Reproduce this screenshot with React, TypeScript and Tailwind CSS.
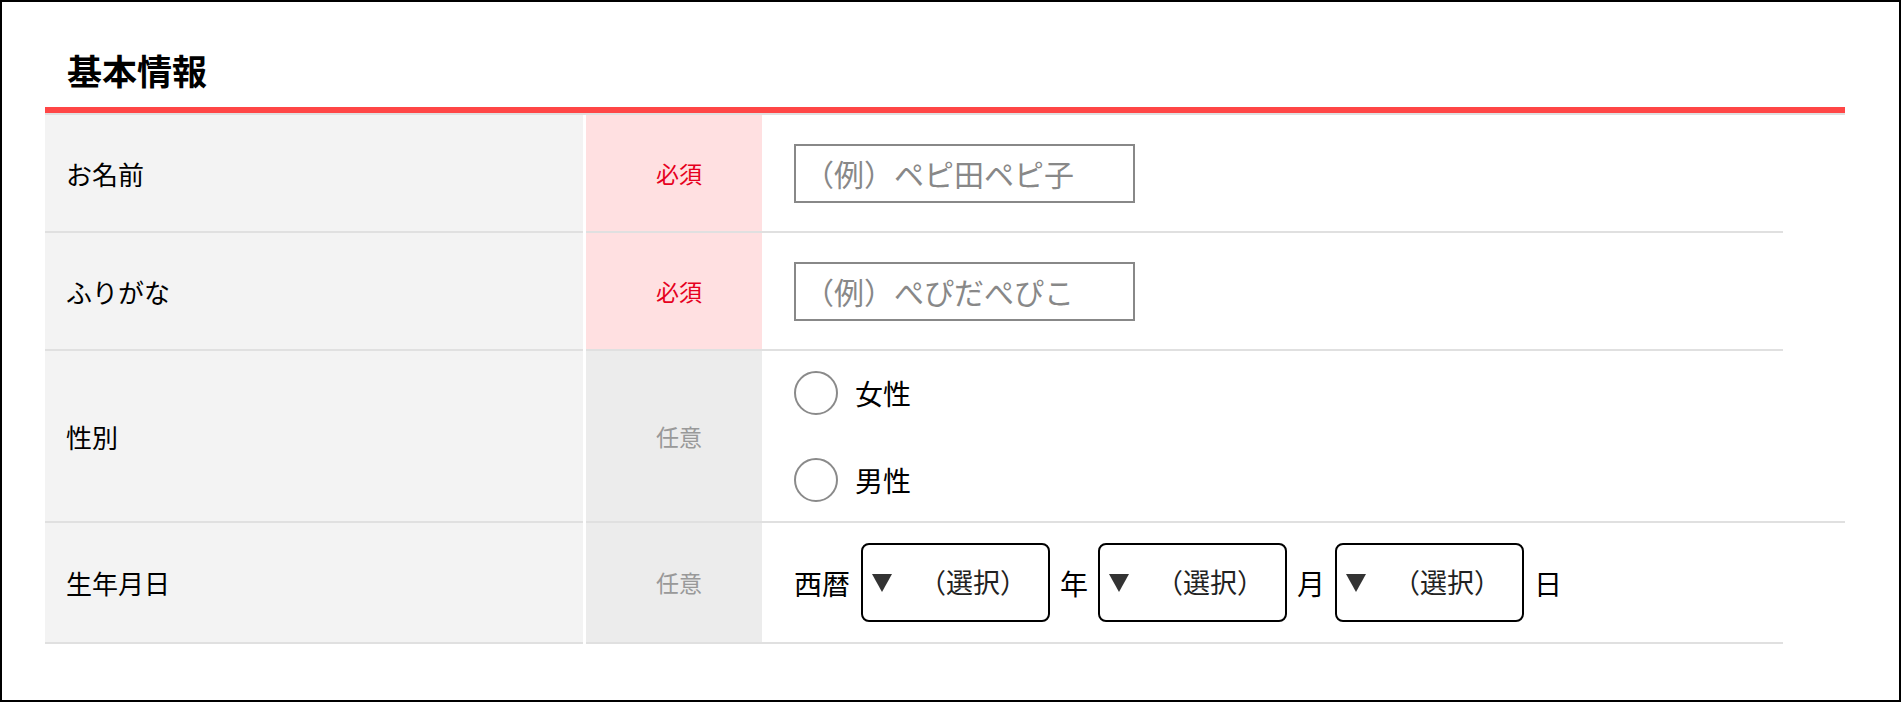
const font = { fontFamily: '"Noto Sans CJK JP", "Noto Sans", sans-serif' };

function Triangle() {
  return (
    <svg width="20" height="18" viewBox="0 0 20 18" className="shrink-0">
      <polygon points="0,0 20,0 10,18" fill="#333" />
    </svg>
  );
}

function DateSelect() {
  return (
    <div className="flex items-center w-[189px] h-[79px] border-2 border-black rounded-[8px] pl-[9px]">
      <Triangle />
      <span className="ml-[27px] text-[27px] text-[#222] whitespace-nowrap">（選択）</span>
    </div>
  );
}

function Row({
  label,
  required,
  wide,
  height,
  children,
}: {
  label: string;
  required: boolean;
  wide?: boolean;
  height: string;
  children: React.ReactNode;
}) {
  return (
    <div className={`flex ${height}`}>
      <div className="w-[538px] shrink-0 bg-[#f3f3f3] border-b-2 border-[#e0e0e0] pl-[21px] flex items-center text-[26px] text-black">
        {label}
      </div>
      <div
        className={`w-[176px] shrink-0 ml-[3px] border-b-2 border-[#e0e0e0] flex items-center justify-center pl-[10px] text-[23px] ${
          required ? "bg-[#ffe0e1] text-[#e60020]" : "bg-[#ececec] text-[#999]"
        }`}
      >
        {required ? "必須" : "任意"}
      </div>
      <div
        className={`${wide ? "w-[1083px]" : "w-[1021px]"} border-b-2 border-[#e0e0e0] pl-[32px] flex items-center`}
      >
        {children}
      </div>
    </div>
  );
}

export default function App() {
  return (
    <div className="w-[1901px] h-[702px] border-2 border-black bg-white overflow-hidden" style={font}>
      <div className="ml-[43px] w-[1800px] pt-[50px]">
        <h2 className="text-[35px] font-bold leading-none pl-[22px] pb-[20px] border-b-[6px] border-[#ff4646] text-black">
          基本情報
        </h2>
        <div className="border-t-2 border-[#e0e0e0]">
          <Row label="お名前" required height="h-[118px]">
            <div className="w-[341px] h-[59px] border-2 border-[#888] flex items-center pl-[8px] text-[30px] text-[#888] whitespace-nowrap">
              （例）ペピ田ペピ子
            </div>
          </Row>
          <Row label="ふりがな" required height="h-[118px]">
            <div className="w-[341px] h-[59px] border-2 border-[#888] flex items-center pl-[8px] text-[30px] text-[#888] whitespace-nowrap">
              （例）ぺぴだぺぴこ
            </div>
          </Row>
          <Row label="性別" required={false} wide height="h-[172px]">
            <div className="flex flex-col gap-[43px]">
              {["女性", "男性"].map((g) => (
                <label key={g} className="flex items-center gap-[17px] text-[28px] text-black">
                  <span className="w-[44px] h-[44px] rounded-full border-2 border-[#8a8a8a] bg-white" />
                  {g}
                </label>
              ))}
            </div>
          </Row>
          <Row label="生年月日" required={false} height="h-[121px]">
            <div className="flex items-center text-[28px] text-black">
              <span className="mr-[11px]">西暦</span>
              <DateSelect />
              <span className="mx-[10px]">年</span>
              <DateSelect />
              <span className="mx-[10px]">月</span>
              <DateSelect />
              <span className="ml-[10px]">日</span>
            </div>
          </Row>
        </div>
      </div>
    </div>
  );
}
